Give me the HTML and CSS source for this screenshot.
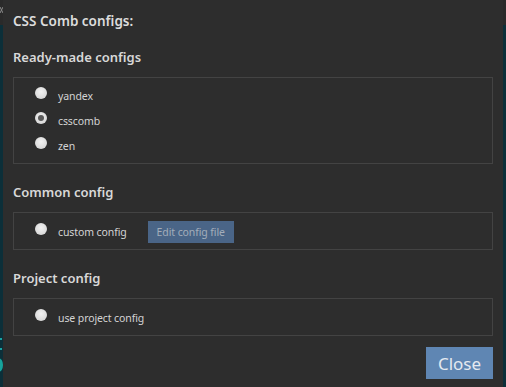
FILE: index.html
```html
<!DOCTYPE html>
<html lang="en">
<head>
  <meta charset="UTF-8">
  <title>CSS Comb configs</title>
  <link rel="stylesheet" href="styles.css">
</head>
<body>
  <div class="app">
    <div class="edge edge-left">
      <svg class="edge-x" width="3" height="6" viewBox="0 0 3 6"><path d="M0 0 L3 6 M3 0 L0 6" stroke="#8a8a8a" stroke-width="1"/></svg>
      <span class="edge-mark"></span>
      <span class="edge-dot"></span>
    </div>

    <main class="dialog">
      <h1 class="dialog-title">CSS Comb configs:</h1>

      <h2 class="group-title">Ready-made configs</h2>
      <div class="group group-list">
        <label class="option"><input type="radio" name="config" value="yandex"><span>yandex</span></label>
        <label class="option"><input type="radio" name="config" value="csscomb" checked><span>csscomb</span></label>
        <label class="option"><input type="radio" name="config" value="zen"><span>zen</span></label>
      </div>

      <h2 class="group-title">Common config</h2>
      <div class="group">
        <label class="option"><input type="radio" name="config" value="custom"><span>custom config</span></label>
        <button type="button" class="btn-edit">Edit config file</button>
      </div>

      <h2 class="group-title">Project config</h2>
      <div class="group">
        <label class="option"><input type="radio" name="config" value="project"><span>use project config</span></label>
      </div>

      <div class="dialog-footer">
        <button type="button" class="btn-close">Close</button>
      </div>
    </main>

    <div class="edge edge-right"></div>
  </div>
</body>
</html>
```

FILE: styles.css
```css
body {
    margin: 0;
    background: #2d2d2d;
    font-family: 'Noto Sans', 'Open Sans', sans-serif;
    color: #d2d2d2;
}

.app {
    display: flex;
    height: 387px;
    overflow: hidden;
}

/* bordes de la ventana de fondo */
.edge {
    flex: 0 0 3px;
    position: relative;
    background: linear-gradient(#2a2a2a 0 25px, #0c2f39 25px);
}

.edge-x {
    position: absolute;
    top: 7px;
    left: 0;
}

.edge-mark {
    position: absolute;
    top: 338px;
    left: 0;
    width: 2px;
    height: 12px;
    border-top: 2px solid #1aa3a3;
    border-bottom: 2px solid #1aa3a3;
    box-sizing: border-box;
}

.edge-dot {
    position: absolute;
    top: 358px;
    left: -6px;
    width: 9px;
    height: 14px;
    border-radius: 50%;
    background: #17a39b;
}

.dialog {
    flex: 1;
    padding: 0 10px;
    background: #2d2d2d;
}

.dialog-title {
    margin: 11px 0 16px;
    font-size: 13.5px;
    line-height: 20px;
    font-weight: 600;
    color: #dcdcdc;
}

.group-title {
    margin: 0 0 10px;
    font-size: 13px;
    line-height: 20px;
    font-weight: 600;
    color: #d8d8d8;
}

.group {
    display: flex;
    align-items: center;
    gap: 21px;
    padding: 8px 20px 6px;
    margin-bottom: 18px;
    border: 1px solid #434343;
}

.group-list {
    flex-direction: column;
    align-items: flex-start;
    gap: 3px;
    padding: 7px 20px 6px;
}

.option {
    display: flex;
    align-items: center;
    height: 22px;
    font-size: 10.5px;
    letter-spacing: -0.1px;
    color: #d4d4d4;
}

.option input {
    appearance: none;
    width: 12px;
    height: 12px;
    margin: 0 11px 6px 1px;
    border-radius: 50%;
    background: radial-gradient(circle at 50% 40%, #f2f2f2, #cfcfcf);
    position: relative;
}

.option input:checked::after {
    content: "";
    position: absolute;
    left: 3px;
    top: 3px;
    width: 6px;
    height: 6px;
    border-radius: 50%;
    background: #5a5a5a;
}

.btn-edit {
    height: 22px;
    padding: 0 9px;
    border: none;
    background: #4a6587;
    color: #a3adba;
    font-family: inherit;
    font-size: 10.5px;
    letter-spacing: -0.1px;
}

.dialog-footer {
    display: flex;
    justify-content: flex-end;
    margin-top: -7px;
}

.btn-close {
    width: 67px;
    height: 32px;
    border: none;
    background: #5f86b3;
    color: #e4e9f0;
    font-family: inherit;
    font-size: 17px;
}
```
